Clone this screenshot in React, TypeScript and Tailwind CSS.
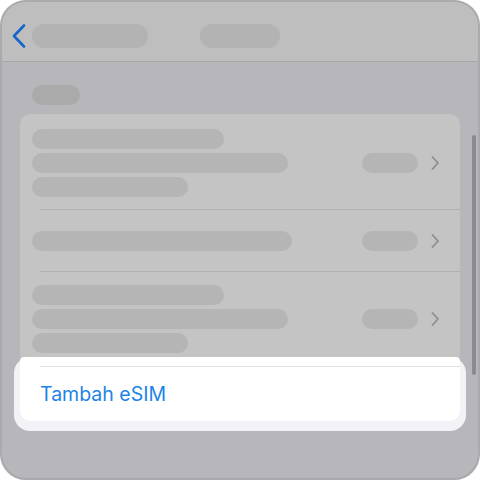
function Pill({ w, className = '' }: { w: string; className?: string }): JSX.Element {
  return <div className={`h-5 rounded-full bg-[#b5b5b5] ${w} ${className}`} />
}

function Chevron(): JSX.Element {
  return (
    <svg width="10" height="16" viewBox="0 0 10 16" className="shrink-0">
      <path d="M2.5 2 L8 8 L2.5 14" fill="none" stroke="#8e8e8e" strokeWidth="1.8" strokeLinecap="round" strokeLinejoin="round" />
    </svg>
  )
}

function BackChevron(): JSX.Element {
  return (
    <svg width="16" height="26" viewBox="0 0 16 26" className="shrink-0">
      <path d="M13 2.5 L3 13 L13 23.5" fill="none" stroke="#1466c8" strokeWidth="2.6" strokeLinecap="round" strokeLinejoin="round" />
    </svg>
  )
}

function Row({ lines, pt, pb, divider }: { lines: string[]; pt: string; pb: string; divider: boolean }): JSX.Element {
  return (
    <div>
      <div className={`flex items-center pl-3 pr-5 ${pt} ${pb}`}>
        <div className="flex flex-col gap-1 flex-1">
          {lines.map((w, i) => (
            <Pill key={i} w={w} />
          ))}
        </div>
        <Pill w="w-14" />
        <div className="ml-3">
          <Chevron />
        </div>
      </div>
      {divider && <div className="ml-5 h-px bg-[#b1b1b1]" />}
    </div>
  )
}

export default function App(): JSX.Element {
  return (
    <div className="w-[480px] h-[480px] bg-white" style={{ fontFamily: 'Inter, "Noto Sans", sans-serif' }}>
      <div className="relative h-full rounded-[26px] border-2 border-[#a9a9ae] overflow-hidden bg-[#b7b6bb] flex flex-col">
        <div className="h-[60px] shrink-0 bg-[#bebebe] border-b border-[#a7a7a7] flex items-center pl-[9px] pt-2">
          <BackChevron />
          <div className="ml-[5px] h-6 w-[116px] rounded-full bg-[#b3b3b3]" />
          <div className="ml-[52px] h-6 w-[80px] rounded-full bg-[#b3b3b3]" />
        </div>

        <div className="flex-1 pt-[23px]">
          <div className="ml-[30px] h-5 w-12 rounded-full bg-[#aaaaaa]" />
          <div className="ml-[18px] mt-[9px] w-[440px]">
            <div className="rounded-t-[10px] bg-[#c4c4c4]">
              <Row lines={['w-48', 'w-64', 'w-[156px]']} pt="pt-[15px]" pb="pb-3" divider />
              <Row lines={['w-[260px]']} pt="pt-[21px]" pb="pb-5" divider />
              <Row lines={['w-48', 'w-64', 'w-[156px]']} pt="pt-[13px]" pb="pb-[4px]" divider={false} />
            </div>
            <div className="-mx-[6px] rounded-2xl bg-[#f2f2f7] px-[6px] pb-[10px]">
              <div className="bg-white rounded-t-[4px] rounded-b-[10px] pt-[9px]">
                <div className="ml-5 h-px bg-[#e2e2e4]" />
                <div className="h-[54px] flex items-center pl-5 pt-[2px] text-[19.5px] text-[#1c84e6] leading-none">
                  Tambah eSIM
                </div>
              </div>
            </div>
          </div>
        </div>

        <div className="absolute right-[2px] top-[133px] h-[240px] w-1 rounded-full bg-[#8b8b8f]" />
      </div>
    </div>
  )
}
